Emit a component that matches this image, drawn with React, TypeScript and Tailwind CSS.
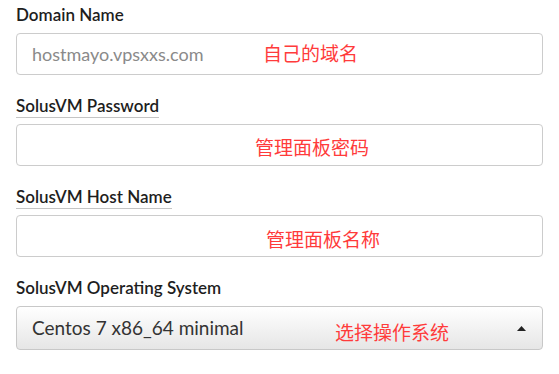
const cjk = "font-['Noto_Sans_CJK_SC',sans-serif]";

function Note({ text, className }: { text: string; className: string }) {
  return (
    <span
      className={`pointer-events-none absolute whitespace-nowrap text-[19px] leading-[19px] text-[#ff3b3b] ${cjk} ${className}`}
    >
      {text}
    </span>
  );
}

function FieldLabel({ text, underline }: { text: string; underline?: boolean }) {
  return (
    <label
      className={`block w-fit border-b pt-[1px] pb-[1px] text-[17px] leading-[20px] font-semibold text-[#1e1e1e] ${
        underline ? "border-[#c4c4c4]" : "border-transparent"
      }`}
    >
      {text}
    </label>
  );
}

export default function App() {
  return (
    <div className="flex w-[559px] flex-col gap-[20px] bg-white px-[16px] pt-[4px] font-['Lato',sans-serif]">
      <div>
        <FieldLabel text="Domain Name" />
        <div className="relative mt-[6px]">
          <input
            className="block h-[42px] w-[527px] rounded-[4px] border border-[#cccccc] bg-white px-[15px] text-[18px] text-[#333] outline-none placeholder:text-[#8a8a8a]"
            placeholder="hostmayo.vpsxxs.com"
          />
          <Note text="自己的域名" className="left-[247px] top-[10px]" />
        </div>
      </div>

      <div>
        <FieldLabel text="SolusVM Password" underline />
        <div className="relative mt-[6px]">
          <input
            type="password"
            className="block h-[42px] w-[527px] rounded-[4px] border border-[#cccccc] bg-white px-[15px] text-[18px] outline-none"
          />
          <Note text="管理面板密码" className="left-[239px] top-[13px]" />
        </div>
      </div>

      <div>
        <FieldLabel text="SolusVM Host Name" underline />
        <div className="relative mt-[6px]">
          <input className="block h-[42px] w-[527px] rounded-[4px] border border-[#cccccc] bg-white px-[15px] text-[18px] outline-none" />
          <Note text="管理面板名称" className="left-[250px] top-[14px]" />
        </div>
      </div>

      <div>
        <FieldLabel text="SolusVM Operating System" />
        <div className="relative mt-[6px] flex h-[44px] w-[527px] items-center justify-between rounded-[4px] border border-[#c8c8c8] bg-gradient-to-b from-white to-[#e6e6e6] pl-[15px] pr-[16px]">
          <span className="text-[19px] text-[#333]">Centos 7 x86_64 minimal</span>
          <svg width="9" height="5" viewBox="0 0 9 5">
            <polygon points="0,5 4.5,0 9,5" fill="#222" />
          </svg>
          <Note text="选择操作系统" className="left-[318px] top-[15px]" />
        </div>
      </div>
    </div>
  );
}
